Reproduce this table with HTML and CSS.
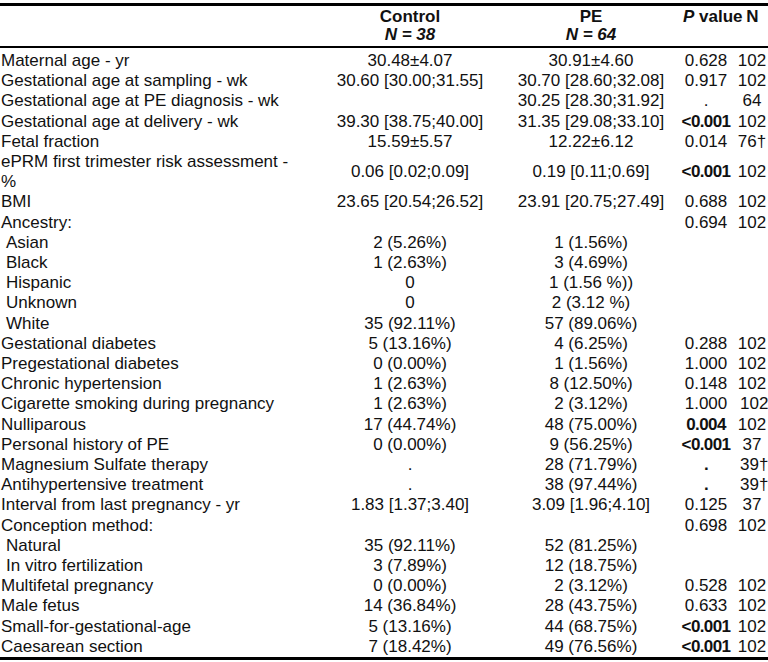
FILE: index.html
```html
<!DOCTYPE html>
<html>
<head>
<meta charset="utf-8">
<link rel="stylesheet" href="styles.css">
</head>
<body>
<table class="tbl">
  <colgroup>
    <col class="c-label">
    <col class="c-ctrl">
    <col class="c-pe">
    <col class="c-p">
    <col class="c-n">
  </colgroup>
  <thead>
    <tr>
      <th class="h-label"></th>
      <th class="h-grp">Control<br><i>N = 38</i></th>
      <th class="h-grp">PE<br><i>N = 64</i></th>
      <th class="h-p"><i>P</i> value</th>
      <th class="h-n">N</th>
    </tr>
  </thead>
  <tbody>
    <tr class="first"><td class="lab">Maternal age - yr</td><td>30.48±4.07</td><td>30.91±4.60</td><td class="pv">0.628</td><td class="n">102</td></tr>
    <tr><td class="lab">Gestational age at sampling - wk</td><td>30.60 [30.00;31.55]</td><td>30.70 [28.60;32.08]</td><td class="pv">0.917</td><td class="n">102</td></tr>
    <tr><td class="lab">Gestational age at PE diagnosis - wk</td><td></td><td>30.25 [28.30;31.92]</td><td class="pv">.</td><td class="n">64</td></tr>
    <tr><td class="lab">Gestational age at delivery - wk</td><td>39.30 [38.75;40.00]</td><td>31.35 [29.08;33.10]</td><td class="pv"><b>&lt;0.001</b></td><td class="n">102</td></tr>
    <tr><td class="lab">Fetal fraction</td><td>15.59±5.57</td><td>12.22±6.12</td><td class="pv">0.014</td><td class="n">76†</td></tr>
    <tr><td class="lab">ePRM first trimester risk assessment -<br>%</td><td>0.06 [0.02;0.09]</td><td>0.19 [0.11;0.69]</td><td class="pv"><b>&lt;0.001</b></td><td class="n">102</td></tr>
    <tr><td class="lab">BMI</td><td>23.65 [20.54;26.52]</td><td>23.91 [20.75;27.49]</td><td class="pv">0.688</td><td class="n">102</td></tr>
    <tr><td class="lab">Ancestry:</td><td></td><td></td><td class="pv">0.694</td><td class="n">102</td></tr>
    <tr><td class="lab sub">Asian</td><td>2 (5.26%)</td><td>1 (1.56%)</td><td class="pv"></td><td class="n"></td></tr>
    <tr><td class="lab sub">Black</td><td>1 (2.63%)</td><td>3 (4.69%)</td><td class="pv"></td><td class="n"></td></tr>
    <tr><td class="lab sub">Hispanic</td><td>0</td><td>1 (1.56 %))</td><td class="pv"></td><td class="n"></td></tr>
    <tr><td class="lab sub">Unknown</td><td>0</td><td>2 (3.12 %)</td><td class="pv"></td><td class="n"></td></tr>
    <tr><td class="lab sub">White</td><td>35 (92.11%)</td><td>57 (89.06%)</td><td class="pv"></td><td class="n"></td></tr>
    <tr><td class="lab">Gestational diabetes</td><td>5 (13.16%)</td><td>4 (6.25%)</td><td class="pv">0.288</td><td class="n">102</td></tr>
    <tr><td class="lab">Pregestational diabetes</td><td>0 (0.00%)</td><td>1 (1.56%)</td><td class="pv">1.000</td><td class="n">102</td></tr>
    <tr><td class="lab">Chronic hypertension</td><td>1 (2.63%)</td><td>8 (12.50%)</td><td class="pv">0.148</td><td class="n">102</td></tr>
    <tr><td class="lab">Cigarette smoking during pregnancy</td><td>1 (2.63%)</td><td>2 (3.12%)</td><td class="pv">1.000</td><td class="n shift">102</td></tr>
    <tr><td class="lab">Nulliparous</td><td>17 (44.74%)</td><td>48 (75.00%)</td><td class="pv"><b>0.004</b></td><td class="n">102</td></tr>
    <tr><td class="lab">Personal history of PE</td><td>0 (0.00%)</td><td>9 (56.25%)</td><td class="pv"><b>&lt;0.001</b></td><td class="n">37</td></tr>
    <tr><td class="lab">Magnesium Sulfate therapy</td><td>.</td><td>28 (71.79%)</td><td class="pv"><b>.</b></td><td class="n shift">39†</td></tr>
    <tr><td class="lab">Antihypertensive treatment</td><td>.</td><td>38 (97.44%)</td><td class="pv"><b>.</b></td><td class="n shift">39†</td></tr>
    <tr><td class="lab">Interval from last pregnancy - yr</td><td>1.83 [1.37;3.40]</td><td>3.09 [1.96;4.10]</td><td class="pv">0.125</td><td class="n">37</td></tr>
    <tr><td class="lab">Conception method:</td><td></td><td></td><td class="pv">0.698</td><td class="n">102</td></tr>
    <tr><td class="lab sub">Natural</td><td>35 (92.11%)</td><td>52 (81.25%)</td><td class="pv"></td><td class="n"></td></tr>
    <tr><td class="lab sub">In vitro fertilization</td><td>3 (7.89%)</td><td>12 (18.75%)</td><td class="pv"></td><td class="n"></td></tr>
    <tr><td class="lab">Multifetal pregnancy</td><td>0 (0.00%)</td><td>2 (3.12%)</td><td class="pv">0.528</td><td class="n">102</td></tr>
    <tr><td class="lab">Male fetus</td><td>14 (36.84%)</td><td>28 (43.75%)</td><td class="pv">0.633</td><td class="n">102</td></tr>
    <tr><td class="lab">Small-for-gestational-age</td><td>5 (13.16%)</td><td>44 (68.75%)</td><td class="pv"><b>&lt;0.001</b></td><td class="n">102</td></tr>
    <tr class="last"><td class="lab">Caesarean section</td><td>7 (18.42%)</td><td>49 (76.56%)</td><td class="pv"><b>&lt;0.001</b></td><td class="n">102</td></tr>
  </tbody>
</table>
</body>
</html>
```
FILE: styles.css
```css
html, body {
  margin: 0;
  padding: 0;
  background: #fff;
}
body {
  padding-top: 3px;
  font-family: "Liberation Sans", Arial, Helvetica, sans-serif;
  font-size: 17px;
  color: #111;
}
.tbl {
  width: 768px;
  border-collapse: collapse;
  table-layout: fixed;
}
.c-label { width: 318px; }
.c-ctrl { width: 184px; }
.c-pe { width: 178px; }
.c-p { width: 52px; }
.c-n { width: 36px; }

.tbl th {
  border-top: 3px solid #000;
  border-bottom: 2px solid #000;
  padding: 2px 0 2px 0;
  line-height: 18px;
  font-weight: bold;
  text-align: center;
  vertical-align: top;
  white-space: nowrap;
}
.tbl th.h-p {
  text-align: left;
  padding-left: 3px;
}
.tbl th.h-n {
  padding-left: 5px;
}
.tbl td {
  padding: 0;
  line-height: 20.2px;
  text-align: center;
  vertical-align: middle;
  white-space: nowrap;
}
.tbl td.pv b {
  letter-spacing: -0.6px;
}
.tbl tr.first td {
  padding-top: 3px;
}
.tbl tr.last td {
  border-bottom: 3px solid #000;
}
.tbl td.lab {
  text-align: left;
  padding-left: 1px;
}
.tbl td.sub {
  padding-left: 6px;
}
.tbl td.n {
  padding-left: 4px;
}
.tbl td.n.shift {
  padding-left: 8px;
}
```
